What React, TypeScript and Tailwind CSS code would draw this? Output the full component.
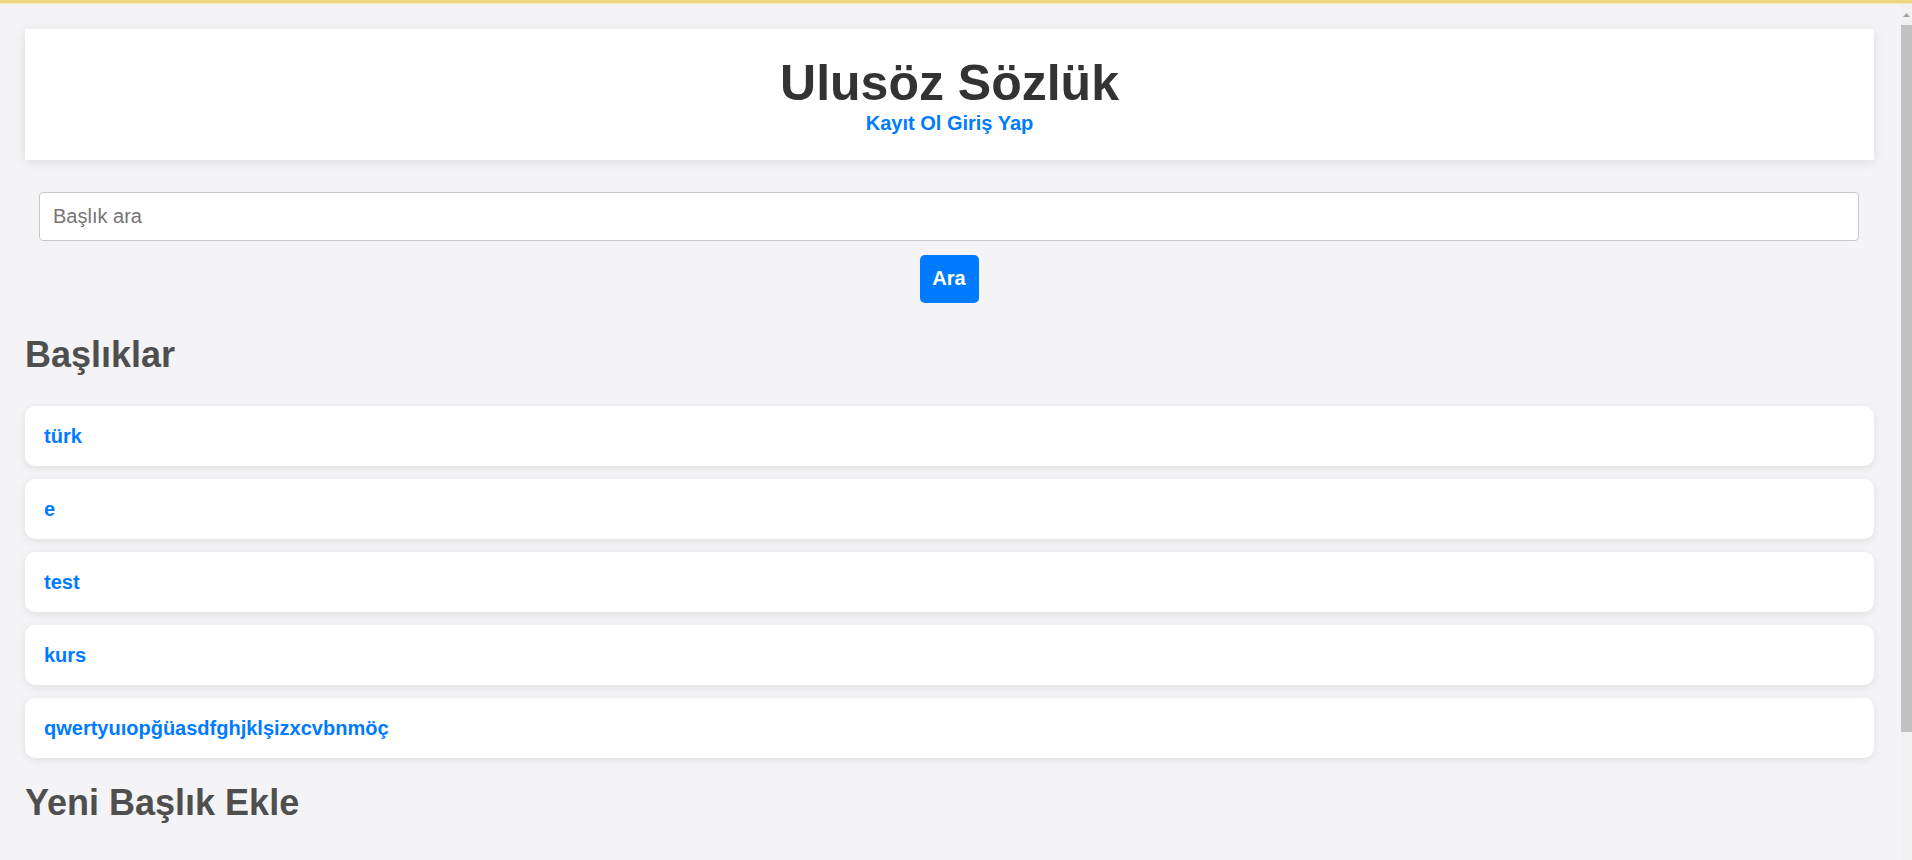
import React from "react";

const topics = ["türk", "e", "test", "kurs", "qwertyuıopğüasdfghjklşizxcvbnmöç"];

export default function App() {
  return (
    <div
      className="h-[860px] w-[1912px] overflow-hidden bg-[#f4f4f7] flex flex-col"
      style={{ fontFamily: '"Liberation Sans", Arial, sans-serif' }}
    >
      <div className="h-[4px] w-full bg-[#ecd67f] border-b border-[#f6e9b4] shrink-0" />
      <div className="flex flex-1 min-h-0">
        {/* page content */}
        <div className="w-[1901px] pl-[25px] pt-[25px] flex flex-col">
          <header className="w-[1849px] h-[131px] bg-white shadow-[0_2px_10px_rgba(0,0,0,0.1)] flex flex-col items-center pt-[26px]">
            <h1 className="text-[50px] leading-[56px] font-bold text-[#333333]">Ulusöz Sözlük</h1>
            <div className="mt-[1px] text-[20px] leading-[23px] font-bold text-[#007bff]">
              <a>Kayıt Ol</a> <a>Giriş Yap</a>
            </div>
          </header>

          <div className="w-[1820px] ml-[14px] mt-[32px] flex flex-col items-center">
            <input
              className="w-full h-[49px] bg-white border border-[#c8c8c8] rounded-[4px] pl-[13px] text-[20px] text-[#333] placeholder:text-[#757575] outline-none"
              placeholder="Başlık ara"
            />
            <button className="mt-[14px] h-[48px] w-[59px] rounded-[5px] bg-[#007bff] text-white text-[20px] leading-[23px] font-bold flex items-center justify-center pb-[1px]">
              Ara
            </button>
          </div>

          <h2 className="mt-[31px] text-[36px] leading-[41px] font-bold text-[#4f4f4f]">Başlıklar</h2>

          <div className="mt-[31px] w-[1849px] flex flex-col gap-[13px]">
            {topics.map((t) => (
              <div
                key={t}
                className="h-[60px] bg-white rounded-[10px] shadow-[0_2px_8px_rgba(0,0,0,0.09)] flex items-center pl-[19px]"
              >
                <a className="text-[20px] leading-[23px] font-bold text-[#007bff]">{t}</a>
              </div>
            ))}
          </div>

          <h2 className="mt-[24px] text-[36px] leading-[41px] font-bold text-[#4f4f4f]">Yeni Başlık Ekle</h2>
        </div>

        {/* scrollbar */}
        <div className="w-[11px] bg-[#f1f1f1] flex flex-col">
          <div className="h-[21px] flex items-center justify-center">
            <svg width="7" height="4" viewBox="0 0 7 4">
              <polygon points="3.5,0 7,4 0,4" fill="#a3a3a3" />
            </svg>
          </div>
          <div className="h-[707px] bg-[#c1c1c1]" />
        </div>
      </div>
    </div>
  );
}
